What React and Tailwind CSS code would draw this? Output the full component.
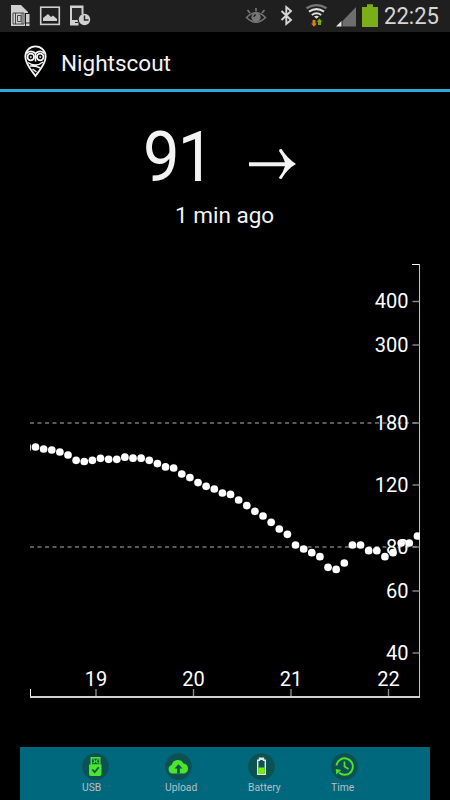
const READINGS = [
  447, 449, 450, 452, 455, 460.3, 461.5, 460.3, 458.3, 459.3, 459.3, 457.2, 458.2, 458.2, 460.3, 463.6,
  466.9, 468, 474, 477.6, 482.6, 486.3, 489, 493, 494.4, 500, 505.6, 511.3, 516, 522.3, 529, 534.3,
  545, 549, 552.7, 556.7, 567.3, 569.4, 563, 545, 545, 550.7, 550.7, 556.7, 552.7, 543, 543, 536,
];

const GLUCOSE_TICKS = [
  { label: '400', y: 301.5 },
  { label: '300', y: 345 },
  { label: '180', y: 423 },
  { label: '120', y: 485 },
  { label: '80', y: 547 },
  { label: '60', y: 591 },
  { label: '40', y: 653 },
];

const HOUR_TICKS = [
  { label: '19', x: 96 },
  { label: '20', x: 193.5 },
  { label: '21', x: 291 },
  { label: '22', x: 388.5 },
];

function StatusBar() {
  return (
    <div className="h-8 shrink-0 bg-[#1f1f1f] flex items-center justify-between">
      <svg width="100" height="32" viewBox="0 0 100 32">
        <path d="M11 5h10l7 7v1h-3v13H11z" fill="#d0d0d0" />
        <rect x="26" y="14" width="3.5" height="8.5" fill="#d0d0d0" />
        <rect x="26" y="23.5" width="3.5" height="2.5" fill="#d0d0d0" />
        <path d="M13 13h11v11H13zM15.5 13v11M22 13v11M17.5 15.5h3.5v6h-3.5z" fill="none" stroke="#454545" />
        <rect x="40.7" y="7.2" width="18.6" height="17.2" fill="none" stroke="#d0d0d0" strokeWidth="1.6" />
        <path d="M43 21v-3l5-4 3 3 2-1.5 4 3.5v2z" fill="#d0d0d0" />
        <path d="M70 5.5h13.5V14a6 6 0 0 0-5 9v2.5H70z" fill="#d0d0d0" />
        <path d="M72 8h9.5v6.5a6 6 0 0 0-3 5.5H72z" fill="#292929" />
        <path d="M75 22.5h3" stroke="#292929" />
        <circle cx="84.5" cy="19.5" r="5.7" fill="#d0d0d0" />
        <path d="M84.5 15.5v4.5h4" fill="none" stroke="#292929" strokeWidth="1.5" />
      </svg>
      <div className="flex items-center">
        <svg width="140" height="32" viewBox="240 0 140 32">
          <path d="M246.5 17.5Q256 8 265.5 17.5Q256 27 246.5 17.5Z" fill="none" stroke="#777" strokeWidth="1.5" />
          <circle cx="256" cy="17.3" r="4.6" fill="#777" />
          <path d="M254 17a2.2 2.2 0 0 1 2-2.2" fill="none" stroke="#222" strokeWidth="1.3" />
          <path d="M256 8v3.5M247.5 10l2.5 3M264.5 10l-2.5 3" stroke="#777" strokeWidth="1.7" />
          <path d="M281.5 11l9.5 9-4.7 4V7l4.7 4-9.5 9" fill="none" stroke="#d5d5d5" strokeWidth="1.9" />
          <path d="M306.5 8.3q10-6.3 20 0" fill="none" stroke="#777" strokeWidth="2.4" />
          <path d="M309 11.7q7.5-5 15 0" fill="none" stroke="#e0e0e0" strokeWidth="2.2" />
          <path d="M311.8 15q4.7-3.3 9.4 0" fill="none" stroke="#e0e0e0" strokeWidth="2" />
          <path d="M314 16.5q2.5-1.3 5 0l-2.5 2.2z" fill="#e0e0e0" />
          <path d="M312.5 20h3v3.5h1.5l-3 3.2-3-3.2h1.5z" fill="#e07b25" />
          <path d="M318 25h3v-3.2h1.5l-3-3.2-3 3.2h1.5z" fill="#6fae08" />
          <path d="M342.5 21v5.5H356V7z" fill="#6e6e6e" />
          <path d="M336 26.5l5.5-5.5v5.5z" fill="#e5e5e5" />
          <path d="M362 7h5V4.2h6V7h5v20h-16z" fill="#7cae18" />
        </svg>
        <div className="w-[70px] h-8 pl-1">
          <span className="block w-[60px] origin-left scale-x-[0.92] text-2xl leading-8 text-[#d6d6d6]">22:25</span>
        </div>
      </div>
    </div>
  );
}

function OwlLogo() {
  return (
    <svg className="ml-6 mt-[3px]" width="24" height="34" viewBox="0 0 24 34" fill="none" stroke="#f5f5f5">
      <path d="M11.5 31C8.5 26.5 1.3 19.5 1.3 11.5a10.2 10.2 0 0 1 20.4 0C21.7 19.5 14.5 26.5 11.5 31z" strokeWidth="1.8" />
      <path d="M2.5 8.5q3-3.5 7-1.5l2 1.5 2-1.5q4-2 7 1.5" strokeWidth="1.7" />
      <circle cx="6.8" cy="12" r="3.3" strokeWidth="1.8" />
      <circle cx="16.2" cy="12" r="3.3" strokeWidth="1.8" />
      <circle cx="6.8" cy="12" r=".6" />
      <circle cx="16.2" cy="12" r=".6" />
      <path d="M11.5 9v7.5M4 17.5q7.5 5.5 15-.5M6 21q5.5-.5 10.5 2M8.5 24l4 3" strokeWidth="1.5" />
    </svg>
  );
}

function GlucoseChart() {
  return (
    <svg className="block shrink-0" width="450" height="507" viewBox="0 240 450 507">
      <defs>
        <clipPath id="plot">
          <rect x="30" y="260" width="390" height="440" />
        </clipPath>
      </defs>
      <g stroke="#777" strokeWidth="1.7" strokeDasharray="4 3.5">
        <path d="M30 423h390" />
        <path d="M30 547h390" />
      </g>
      <path d="M412 264.5h7.5V696" fill="none" stroke="#c4c4c4" />
      <path d="M412 264.5h7.5" stroke="#fff" />
      <path d="M30.5 689v8" stroke="#fff" />
      <path d="M30 697h390" stroke="#cdd1d1" strokeWidth="2" />
      {GLUCOSE_TICKS.map((t) => (
        <g key={t.label}>
          <path d={`M412.5 ${t.y}h7`} stroke="#8c8c8c" strokeWidth="1.4" />
          <text x="408.5" y={t.y + 6.5} textAnchor="end" fontSize="20" fill="#fff">{t.label}</text>
        </g>
      ))}
      {HOUR_TICKS.map((t) => (
        <g key={t.label}>
          <path d={`M${t.x} 689v7`} stroke="#8c8c8c" strokeWidth="1.4" />
          <text x={t.x} y="685.5" textAnchor="middle" fontSize="20" fill="#fff">{t.label}</text>
        </g>
      ))}
      <g fill="#fff" clipPath="url(#plot)">
        <path d="M30 444.5h.8v6H30z" />
        {READINGS.map((y, i) => (
          <circle key={i} cx={35.5 + i * 8.126} cy={y} r="3.85" />
        ))}
      </g>
    </svg>
  );
}

function UsbIcon() {
  return (
    <svg width="27" height="27" viewBox="0 0 27 27">
      <circle cx="13.5" cy="13.5" r="13.3" fill="#0d5153" />
      <path d="M8.5 4h10v7.5h1V21q0 2-2 2H9q-2 0-2-2v-9.5h1.5z" fill="#4be52b" />
      <path d="M10 5.7h7.2v5.5H10z" fill="#0d5153" />
      <path d="M10.5 6.8h2v3h-2M16.7 6.8h-2v3h2M12.5 8.3h2.5" fill="none" stroke="#4be52b" />
      <path d="M10.3 16.5l2.4 2.7 4-5" fill="none" stroke="#0d5153" strokeWidth="1.8" />
    </svg>
  );
}

function UploadIcon() {
  return (
    <svg width="27" height="27" viewBox="0 0 27 27">
      <circle cx="13.5" cy="13.5" r="13.3" fill="#0d5153" />
      <path d="M7.5 20.5a4.3 4.3 0 0 1-.8-8.4A6.3 6.3 0 0 1 18.5 10.5a5.1 5.1 0 0 1 .7 10z" fill="#4be52b" />
      <path d="M12.2 20.5v-5H9.5l4-4.3 4 4.3h-2.7v5z" fill="#0d5153" />
    </svg>
  );
}

function BatteryIcon() {
  return (
    <svg width="27" height="27" viewBox="0 0 27 27">
      <circle cx="13.5" cy="13.5" r="13.3" fill="#0d5153" />
      <path d="M11.5 5.3h4v2h1.8v14H9.7v-14h1.8z" fill="#0d5153" stroke="#e2e8df" strokeWidth="1.4" />
      <path d="M11.5 6h4" stroke="#e2e8df" strokeWidth="2" />
      <path d="M10.3 14.5h6.4v6.2h-6.4z" fill="#76f00b" />
    </svg>
  );
}

function TimeIcon() {
  return (
    <svg width="27" height="27" viewBox="0 0 27 27" fill="none" stroke="#4be52b">
      <circle cx="13.5" cy="13.5" r="13.3" fill="#0d5153" stroke="none" />
      <path d="M5.5 12.5a8.2 8.2 0 1 1 2.7 7.2" strokeWidth="1.9" />
      <path d="M13.5 8.5v5l4 2.5" strokeWidth="1.7" />
      <path d="M4.7 16l5.5 1-4.8 4.5z" fill="#4be52b" stroke="none" />
    </svg>
  );
}

const STATUS_ITEMS = [
  { label: 'USB', Icon: UsbIcon },
  { label: 'Upload', Icon: UploadIcon },
  { label: 'Battery', Icon: BatteryIcon },
  { label: 'Time', Icon: TimeIcon },
];

export default function App() {
  return (
    <div className="w-[450px] h-[800px] bg-black overflow-hidden flex flex-col font-[Roboto,sans-serif] text-[#f3f3f3]">
      <StatusBar />
      <header className="h-[60px] shrink-0 flex items-center border-b-[3px] border-[#2da9dc]">
        <OwlLogo />
        <h1 className="ml-[13px] mt-1 text-[22.5px] leading-7">Nightscout</h1>
      </header>

      <section className="h-[148px] shrink-0 pt-[29px]">
        <div className="flex items-center pl-[143px] h-[72px]">
          <span className="w-[82px] origin-left scale-x-[0.93] text-[70px] leading-[72px] tracking-[-2px]">91</span>
          <svg className="ml-6 mt-[14px]" width="48" height="32" viewBox="0 0 48 32">
            <path d="M0 14.3h36Q34 8 30 3q0-2.500 2.500-2Q38 10 47 16 38 21 32.500 31q-2.500 0-2.500-1.500Q34 25 36 18.300H0z" fill="#f3f3f3" />
          </svg>
        </div>
        <p className="pl-[175px] mt-2 text-[22.5px] leading-7">1 min ago</p>
      </section>

      <GlucoseChart />

      <footer className="mx-5 h-[53px] shrink-0 bg-[#00687c] flex gap-[56px] pl-[62px] pt-1.5">
        {STATUS_ITEMS.map(({ label, Icon }) => (
          <div key={label} className="w-[27px]">
            <Icon />
            <div className="mt-px text-[10.3px] leading-[14px] text-[#b9bfc1] whitespace-nowrap">{label}</div>
          </div>
        ))}
      </footer>
    </div>
  );
}
